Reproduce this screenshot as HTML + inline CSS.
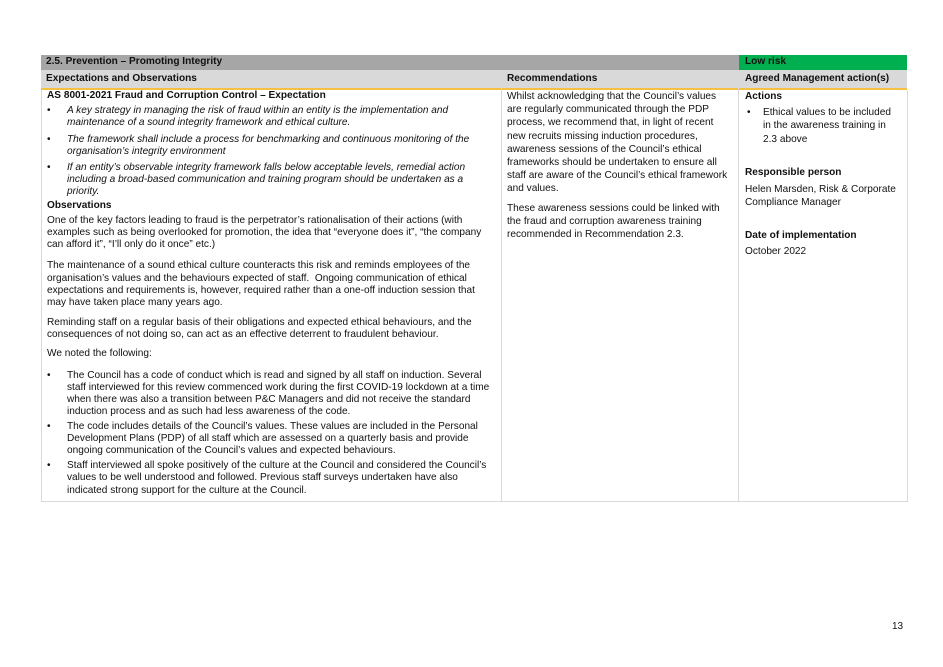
<!DOCTYPE html><html><head><style>
body{margin:0;width:943px;height:667px;background:#fff;font-family:"Liberation Sans",sans-serif;color:#111;position:relative;overflow:hidden}
.a{position:absolute;white-space:nowrap}
.l{font-size:10.1px;line-height:12.2px}
.m{font-size:10.1px;line-height:13.2px}
b{font-weight:bold}
</style></head><body>
<div class="a" style="left:41px;top:55px;width:698px;height:15px;background:#a6a6a6"></div>
<div class="a" style="left:739px;top:55px;width:168px;height:15px;background:#00b050"></div>
<div class="a" style="left:41px;top:70px;width:866px;height:18px;background:#d9d9d9"></div>
<div class="a" style="left:41px;top:88px;width:866px;height:2px;background:#f6c142"></div>
<div class="a" style="left:41px;top:90px;width:865px;height:411px;border:1px solid #d9d9d9;border-top:none"></div>
<div class="a" style="left:501px;top:70px;width:1px;height:431px;background:#d9d9d9"></div>
<div class="a" style="left:738px;top:70px;width:1px;height:431px;background:#d9d9d9"></div>
<div class="a l" style="left:46px;top:56px;font-weight:bold">2.5. Prevention – Promoting Integrity</div>
<div class="a l" style="left:745px;top:56px;font-weight:bold">Low risk</div>
<div class="a l" style="left:46px;top:73px;font-weight:bold">Expectations and Observations</div>
<div class="a l" style="left:507px;top:73px;font-weight:bold">Recommendations</div>
<div class="a l" style="left:745px;top:73px;font-weight:bold">Agreed Management action(s)</div>

<div class="a l" style="left:47px;top:90px">
<b>AS 8001-2021 Fraud and Corruption Control – Expectation</b>
<div style="margin-top:3px;position:relative;padding-left:20px;font-style:italic"><span style="position:absolute;left:0;font-style:normal">•</span>A key strategy in managing the risk of fraud within an entity is the implementation and<br>maintenance of a sound integrity framework and ethical culture.</div>
<div style="margin-top:4px;position:relative;padding-left:20px;font-style:italic"><span style="position:absolute;left:0;font-style:normal">•</span>The framework shall include a process for benchmarking and continuous monitoring of the<br>organisation’s integrity environment</div>
<div style="margin-top:4px;position:relative;padding-left:20px;font-style:italic"><span style="position:absolute;left:0;font-style:normal">•</span>If an entity’s observable integrity framework falls below acceptable levels, remedial action<br>including a broad-based communication and training program should be undertaken as a<br>priority.</div>
<div style="margin-top:1px"><b>Observations</b></div>
<div style="margin-top:3px">One of the key factors leading to fraud is the perpetrator’s rationalisation of their actions (with<br>examples such as being overlooked for promotion, the idea that “everyone does it”, “the company<br>can afford it”, “I’ll only do it once” etc.)</div>
<div style="margin-top:9px">The maintenance of a sound ethical culture counteracts this risk and reminds employees of the<br>organisation’s values and the behaviours expected of staff.&nbsp; Ongoing communication of ethical<br>expectations and requirements is, however, required rather than a one-off induction session that<br>may have taken place many years ago.</div>
<div style="margin-top:8px">Reminding staff on a regular basis of their obligations and expected ethical behaviours, and the<br>consequences of not doing so, can act as an effective deterrent to fraudulent behaviour.</div>
<div style="margin-top:6px">We noted the following:</div>
<div style="margin-top:10px;position:relative;padding-left:20px"><span style="position:absolute;left:0">•</span>The Council has a code of conduct which is read and signed by all staff on induction. Several<br>staff interviewed for this review commenced work during the first COVID-19 lockdown at a time<br>when there was also a transition between P&amp;C Managers and did not receive the standard<br>induction process and as such had less awareness of the code.</div>
<div style="margin-top:2px;position:relative;padding-left:20px"><span style="position:absolute;left:0">•</span>The code includes details of the Council’s values. These values are included in the Personal<br>Development Plans (PDP) of all staff which are assessed on a quarterly basis and provide<br>ongoing communication of the Council’s values and expected behaviours.</div>
<div style="margin-top:3px;position:relative;padding-left:20px"><span style="position:absolute;left:0">•</span>Staff interviewed all spoke positively of the culture at the Council and considered the Council’s<br>values to be well understood and followed. Previous staff surveys undertaken have also<br>indicated strong support for the culture at the Council.</div>
</div>

<div class="a m" style="left:507px;top:90px">Whilst acknowledging that the Council’s values<br>are regularly communicated through the PDP<br>process, we recommend that, in light of recent<br>new recruits missing induction procedures,<br>awareness sessions of the Council’s ethical<br>frameworks should be undertaken to ensure all<br>staff are aware of the Council’s ethical framework<br>and values.
<div style="margin-top:6px">These awareness sessions could be linked with<br>the fraud and corruption awareness training<br>recommended in Recommendation 2.3.</div></div>

<div class="a m" style="left:745px;top:90px"><b>Actions</b>
<div style="margin-top:3px;position:relative;padding-left:18px"><span style="position:absolute;left:2px">•</span>Ethical values to be included<br>in the awareness training in<br>2.3 above</div>
<div style="margin-top:20px"><b>Responsible person</b></div>
<div style="margin-top:4px">Helen Marsden, Risk &amp; Corporate<br>Compliance Manager</div>
<div style="margin-top:20px"><b>Date of implementation</b></div>
<div style="margin-top:2px">October 2022</div></div>

<div class="a" style="left:892px;top:621px;font-size:10px">13</div>
</body></html>
